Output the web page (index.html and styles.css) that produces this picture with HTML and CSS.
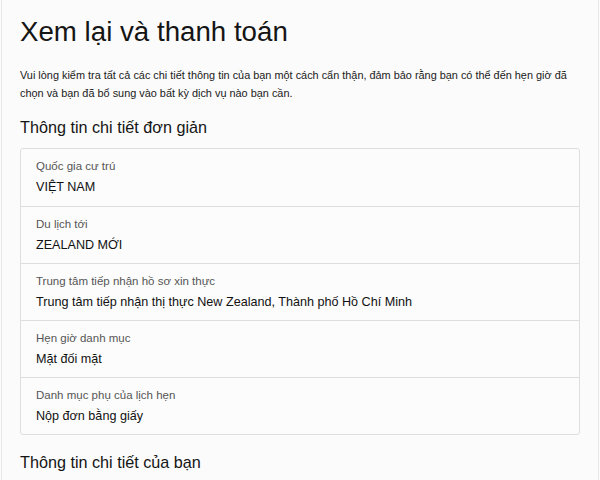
FILE: index.html
```html
<!DOCTYPE html>
<html lang="vi">
<head>
<meta charset="utf-8">
<link rel="stylesheet" href="styles.css">
</head>
<body>
<div class="page">
  <h1 class="title">Xem lại và thanh toán</h1>
  <p class="intro">Vui lòng kiểm tra tất cả các chi tiết thông tin của bạn một cách cẩn thận, đảm bảo rằng bạn có thể đến hẹn giờ đã chọn và bạn đã bổ sung vào bất kỳ dịch vụ nào bạn cần.</p>
  <h2 class="section">Thông tin chi tiết đơn giản</h2>
  <div class="card">
    <div class="row"><div class="label">Quốc gia cư trú</div><div class="value">VIỆT NAM</div></div>
    <div class="row"><div class="label">Du lịch tới</div><div class="value">ZEALAND MỚI</div></div>
    <div class="row"><div class="label">Trung tâm tiếp nhận hồ sơ xin thực</div><div class="value">Trung tâm tiếp nhận thị thực New Zealand, Thành phố Hồ Chí Minh</div></div>
    <div class="row"><div class="label">Hẹn giờ danh mục</div><div class="value">Mặt đối mặt</div></div>
    <div class="row"><div class="label">Danh mục phụ của lịch hẹn</div><div class="value">Nộp đơn bằng giấy</div></div>
  </div>
  <h2 class="section section-2">Thông tin chi tiết của bạn</h2>
</div>
</body>
</html>
```
FILE: styles.css
```css
html, body {
  margin: 0;
  padding: 0;
  background: #fbfbfb;
}
body {
  font-family: "Liberation Sans", Arial, sans-serif;
  color: #151515;
}
.page {
  margin: 0 1px;
  min-height: 480px;
  box-sizing: border-box;
  border-left: 1px solid #e9e9e9;
  border-right: 1px solid #e9e9e9;
  padding: 15px 18px 0 18px;
  background: #fbfbfb;
}
.title {
  margin: 0;
  font-size: 27.7px;
  font-weight: 400;
  line-height: 34px;
}
.intro {
  margin: 17px -8px 0 0;
  font-size: 10.9px;
  line-height: 18px;
  color: #1a1a1a;
}
.section {
  margin: 14px 0 0 0;
  font-size: 16.2px;
  font-weight: 400;
  line-height: 22px;
}
.card {
  margin-top: 10px;
  border: 1px solid #dedede;
  border-radius: 3px;
  background: #fcfcfc;
}
.row {
  height: 57px;
  box-sizing: border-box;
  padding: 10px 15px 0 15px;
  border-top: 1px solid #dedede;
}
.row:first-child {
  border-top: none;
}
.label {
  font-size: 11.5px;
  line-height: 14px;
  color: #555;
}
.value {
  margin-top: 6px;
  font-size: 12.6px;
  line-height: 16px;
  color: #111;
}
.section-2 {
  margin-top: 16px;
}
```
